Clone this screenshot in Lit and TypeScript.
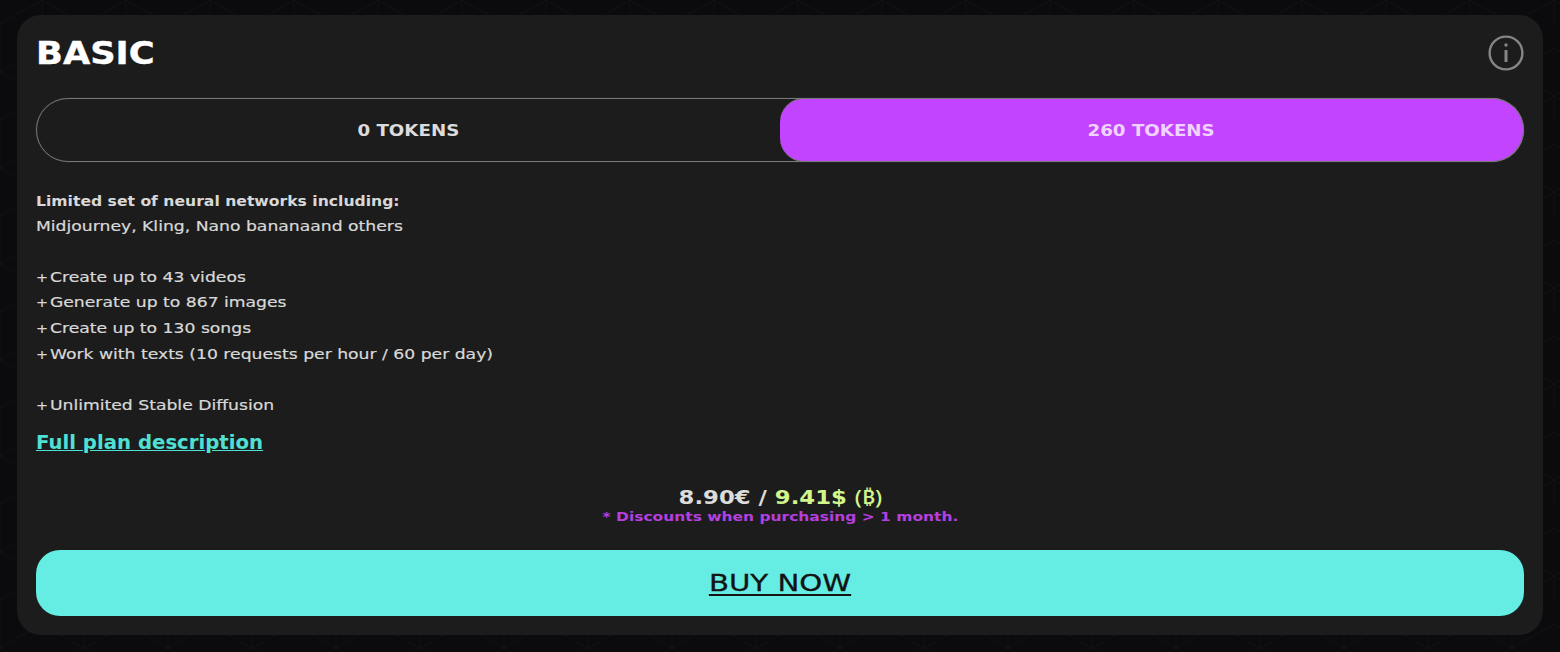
import { LitElement, html, css } from "lit";
import { customElement, state } from "lit/decorators.js";

const INTRO = "Midjourney, Kling, Nano bananaand others";
const GROUPS = [
  ["Create up to 43 videos", "Generate up to 867 images", "Create up to 130 songs", "Work with texts (10 requests per hour / 60 per day)"],
  ["Unlimited Stable Diffusion"],
];

// the reference font is an extended one, so text gets stretched sideways with scaleX
@customElement("app-root")
export class AppRoot extends LitElement {
  static styles = css`
    :host {
      display: block;
      box-sizing: border-box;
      height: 652px;
      padding: 15px 17px 17px;
      background-color: #0b0b0e;
      background-image: url("data:image/svg+xml,%3Csvg xmlns='http://www.w3.org/2000/svg' width='84' height='96'%3E%3Cpath d='M42 0L84 24V72L42 96L0 72V24Z M42 0V24 M0 72L42 48L84 72' fill='none' stroke='%23ffffff' stroke-opacity='.022'/%3E%3C/svg%3E");
      font-family: "DejaVu Sans", "Noto Sans", sans-serif;
      color: #dcdcdc;
    }
    .card {
      box-sizing: border-box;
      height: 620px;
      padding: 20px 19px 19px;
      background: #1c1c1c;
      border-radius: 24px;
      display: flex;
      flex-direction: column;
    }
    .head {
      display: flex;
      justify-content: space-between;
      align-items: center;
      height: 36px;
    }
    .title {
      font-size: 31.5px;
      font-weight: 700;
      color: #fff;
      transform: scaleX(1.12);
      transform-origin: left center;
      -webkit-text-stroke: 0.4px #fff;
    }
    .info {
      display: block;
      width: 36px;
      height: 36px;
    }
    .toggle {
      display: grid;
      grid-template-columns: 1fr 1fr;
      height: 64px;
      margin-top: 27px;
      box-sizing: border-box;
      border: 1px solid #777;
      border-radius: 32px;
      box-shadow: 0 0 1px #666;
    }
    .opt {
      display: flex;
      align-items: center;
      justify-content: center;
      margin: -1px;
      padding: 1px 0 0;
      border: 0;
      background: none;
      color: #dcdcdc;
      font: 700 15.5px "DejaVu Sans", sans-serif;
      border-radius: 24px 32px 32px 24px;
    }
    .opt span {
      transform: scaleX(1.175);
    }
    .opt.on {
      margin-left: 0;
      background: #c344ff;
      color: #f0d4ff;
      border: 1px solid #777;
      border-left: 0;
    }
    .desc {
      margin-top: 26px;
      line-height: 25.6px;
      color: #d8d8d8;
    }
    .desc b {
      display: block;
      width: fit-content;
      height: 25.6px;
      font-weight: 700;
      font-size: 14.6px;
      transform: scaleX(1.07);
      transform-origin: left center;
    }
    .line {
      width: fit-content;
      height: 25.6px;
      white-space: pre;
      font-size: 14.4px;
      transform: scaleX(1.195);
      transform-origin: left center;
      -webkit-text-stroke: 0.2px #d8d8d8;
    }
    .plus {
      display: inline-block;
      width: 11.7px;
      font-size: 12px;
      line-height: 1;
    }
    .group {
      margin-top: 25.6px;
    }
    .link {
      margin-top: 11px;
      align-self: flex-start;
      color: #4fe0d4;
      font-size: 19px;
      font-weight: 700;
      line-height: 26px;
      transform: scaleX(1.037);
      transform-origin: left center;
    }
    .price {
      margin-top: 29px;
      align-self: center;
      font-size: 20px;
      font-weight: 700;
      line-height: 26px;
      color: #dcdcdc;
      transform: scaleX(1.139);
    }
    .price span {
      color: #d2f58c;
    }
    .price .btc {
      font-family: "Noto Sans", "DejaVu Sans", sans-serif;
      font-weight: 500;
    }
    .note {
      align-self: center;
      font-size: 13px;
      font-weight: 700;
      line-height: 14px;
      color: #b63fe0;
      transform: scaleX(1.19);
    }
    .buy {
      margin-top: auto;
      height: 66px;
      display: flex;
      align-items: center;
      justify-content: center;
      border-radius: 24px;
      background: #65ede3;
      color: #141414;
      font-size: 23px;
      -webkit-text-stroke: 0.3px #141414;
    }
    .buy span {
      transform: scaleX(1.27);
      text-decoration: underline;
      text-underline-offset: 3px;
    }
  `;

  @state() selected = 1;

  render() {
    return html`
      <div class="card">
        <div class="head">
          <div class="title">BASIC</div>
          <svg class="info" viewBox="0 0 36 36" fill="none" stroke="#858585" stroke-width="2.4">
            <circle cx="18" cy="18" r="16.4" />
            <path d="M18 15v12" stroke-width="3" />
            <circle cx="18" cy="10" r="1.7" fill="#858585" stroke="none" />
          </svg>
        </div>
        <div class="toggle">
          ${["0 TOKENS", "260 TOKENS"].map(
            (t, i) => html`<button class="opt ${i === this.selected ? "on" : ""}" @click=${() => (this.selected = i)}><span>${t}</span></button>`
          )}
        </div>
        <div class="desc">
          <b>Limited set of neural networks including:</b>
          <div class="line">${INTRO}</div>
          ${GROUPS.map(
            (g) => html`<div class="group">
              ${g.map((l) => html`<div class="line"><span class="plus">+</span>${l}</div>`)}
            </div>`
          )}
        </div>
        <a class="link" href="#">Full plan description</a>
        <div class="price">8.90€ / <span>9.41$ <span class="btc">(₿)</span></span></div>
        <div class="note">* Discounts when purchasing &gt; 1 month.</div>
        <div class="buy"><span>BUY NOW</span></div>
      </div>
    `;
  }
}
